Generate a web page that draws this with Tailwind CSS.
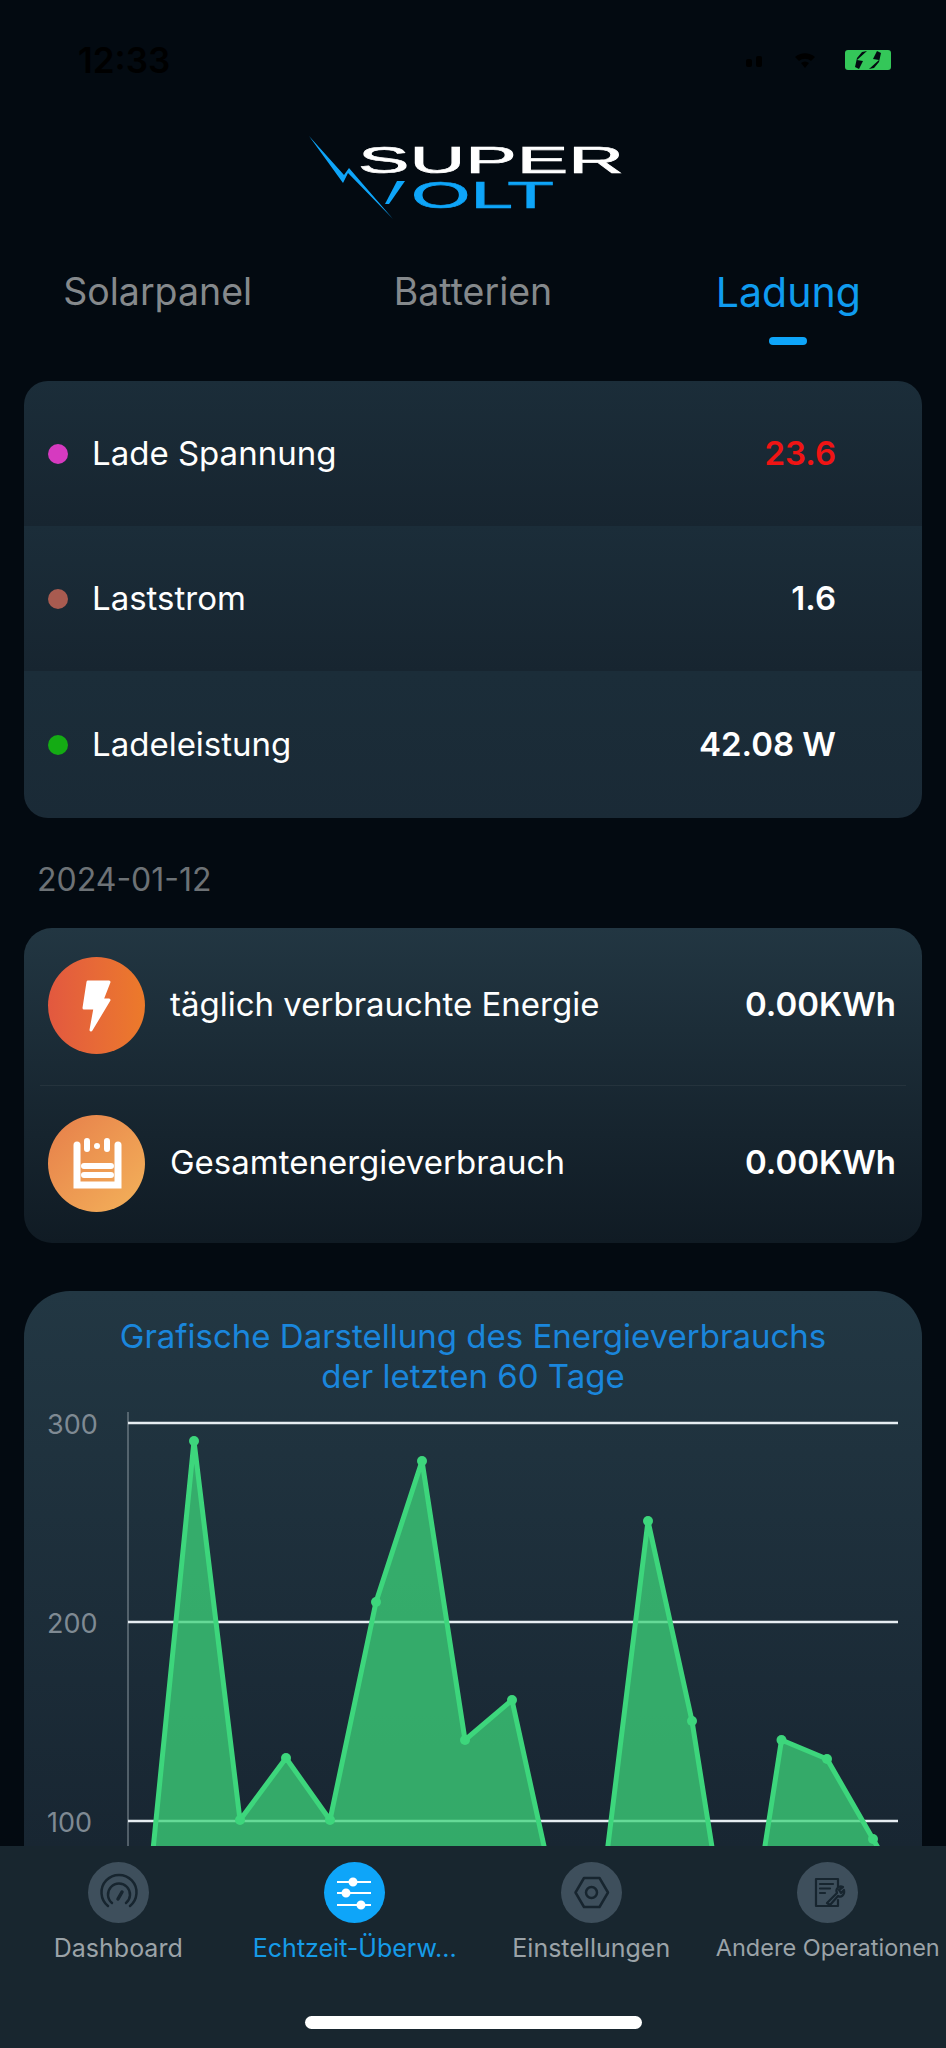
<!DOCTYPE html>
<html lang="de">
<head>
  <meta charset="UTF-8">
  <meta name="viewport" content="width=device-width, initial-scale=1.0">
  <title>Super Volt</title>
  <script src="https://cdn.jsdelivr.net/npm/@tailwindcss/browser@4"></script>
</head>
<body class="bg-[#030a11]">
<div class="w-[946px] h-[2048px] flex flex-col overflow-hidden font-['Inter','Noto_Sans',sans-serif] bg-[#030a11]">

  <!-- status bar -->
  <div class="h-[130px] shrink-0 flex items-start justify-between pl-[78px] pr-[55px] pt-[42px]">
    <span class="text-[35px] leading-[36px] font-semibold text-black">12:33</span>
    <div class="flex items-center gap-[28px] pt-[8px]">
      <svg width="20" height="14" viewBox="0 0 20 14" fill="#000"><rect x="1" y="6" width="6" height="8" rx="2"/><rect x="11" y="3" width="6" height="11" rx="2"/></svg>
      <svg width="24" height="18" viewBox="0 0 24 18" fill="#000"><path d="M2 6c6-5 14-5 20 0l-4 4c-4-3-8-3-12 0z"/><path d="M8 12c2.500-2 5.500-2 8 0l-4 5z"/></svg>
      <svg width="46" height="20" viewBox="0 0 46 20"><rect width="46" height="20" rx="3" fill="#34c759"/><path d="M22 1 12 10 18 11 14 19 10 17 12 8 17 2zM24 19 34 10 28 9 32 1 36 3 34 12 29 18z" fill="#030a11"/></svg>
    </div>
  </div>

  <!-- logo -->
  <div class="h-[95px] shrink-0 flex justify-center pr-[16px]">
    <svg width="330" height="95" viewBox="300 130 330 95">
      <path d="M309 136 343 183 348 173 393 219 349 168 344 175z" fill="#0ea5f9"/>
      <path d="M397 181H405L389 204H385z" fill="#0ea5f9"/>
      <text x="358" y="173" textLength="266" lengthAdjust="spacingAndGlyphs" font-family="Liberation Sans" font-size="36" fill="#fff" stroke="#fff" stroke-width=".6">SUPER</text>
      <text x="411" y="208" textLength="143" lengthAdjust="spacingAndGlyphs" font-family="Liberation Sans" font-size="37" fill="#0ea5f9" stroke="#0ea5f9" stroke-width=".6">OLT</text>
    </svg>
  </div>

  <!-- tabs -->
  <div class="grid grid-cols-3 shrink-0 mt-[45px] text-center text-[37.500px] leading-[44px] text-[#85898c]">
    <div>Solarpanel</div>
    <div>Batterien</div>
    <div class="flex flex-col items-center text-[41px] text-[#0f9cf0]">
      <span>Ladung</span>
      <span class="w-[38px] h-[8px] mt-[23px] rounded-full bg-[#0ea5f9]"></span>
    </div>
  </div>

  <!-- live values -->
  <div class="mx-[24px] mt-[36px] shrink-0 rounded-[24px] overflow-hidden text-[33px] text-white">
    <div class="h-[145px] flex items-center pl-[24px] pr-[86px] pt-[1px] bg-gradient-to-b from-[#1b2d39] to-[#172530]">
      <span class="w-[20px] h-[20px] rounded-full bg-[#d63ac0]"></span>
      <span class="ml-[24px] flex-1">Lade Spannung</span>
      <span class="font-semibold text-[#f01414]">23.6</span>
    </div>
    <div class="h-[145px] flex items-center pl-[24px] pr-[86px] pt-[1px] bg-gradient-to-b from-[#1b2d39] to-[#172530]">
      <span class="w-[20px] h-[20px] rounded-full bg-[#a85b50]"></span>
      <span class="ml-[24px] flex-1">Laststrom</span>
      <span class="font-semibold">1.6</span>
    </div>
    <div class="h-[147px] flex items-center pl-[24px] pr-[86px] pt-[1px] bg-gradient-to-b from-[#1b2d39] to-[#1a2a36]">
      <span class="w-[20px] h-[20px] rounded-full bg-[#14ab14]"></span>
      <span class="ml-[24px] flex-1">Ladeleistung</span>
      <span class="font-semibold">42.08 W</span>
    </div>
  </div>

  <div class="ml-[37px] mt-[42px] shrink-0 text-[32px] leading-[40px] text-[#6d7276]">2024-01-12</div>

  <!-- energy -->
  <div class="mx-[24px] mt-[28px] shrink-0 rounded-[28px] bg-gradient-to-b from-[#223642] to-[#101b24] text-[33px] text-white">
    <div class="h-[157px] flex items-center pl-[24px] pr-[26px] pb-[3px]">
      <span class="w-[97px] h-[97px] rounded-full bg-gradient-to-r from-[#e2583f] to-[#ec7a2a] flex items-center justify-center">
        <svg width="97" height="97" viewBox="0 0 97 97"><path d="M40 25H61L54 43H61L43 73 47 51H36z" fill="#fff" stroke="#fff" stroke-width="3" stroke-linejoin="round"/></svg>
      </span>
      <span class="ml-[25px] flex-1">täglich verbrauchte Energie</span>
      <span class="font-semibold">0.00KWh</span>
    </div>
    <div class="mx-[16px] h-px bg-white/5"></div>
    <div class="h-[157px] flex items-center pl-[24px] pr-[26px] pb-[3px]">
      <span class="w-[97px] h-[97px] rounded-full bg-gradient-to-br from-[#e67e4a] to-[#f3b25a] flex items-center justify-center">
        <svg width="97" height="97" viewBox="0 0 97 97" fill="none" stroke="#fff"><path d="M29 30V70H70V30" stroke-width="7" stroke-linecap="round" stroke-linejoin="miter"/><path d="M39 26V34M59 26V34" stroke-width="6" stroke-linecap="round"/><path d="M36 51H63M36 60H63" stroke-width="6" stroke-linecap="round"/><circle cx="49" cy="31" r="3" fill="#fff" stroke="none"/></svg>
      </span>
      <span class="ml-[25px] flex-1">Gesamtenergieverbrauch</span>
      <span class="font-semibold">0.00KWh</span>
    </div>
  </div>

  <!-- chart -->
  <div class="mx-[24px] mt-[48px] flex-1 min-h-0 overflow-hidden rounded-t-[46px] bg-gradient-to-b from-[#223743] to-[#182632]">
    <div class="pt-[25px] pb-[1px] text-center text-[33px] leading-[40px] text-[#1a86dc]">
      <div>Grafische Darstellung des Energieverbrauchs</div>
      <div>der letzten 60 Tage</div>
    </div>
    <svg width="898" height="449" viewBox="24 1397 898 449" class="block">
      <g font-family="Inter" font-size="27" fill="#7f8a93">
        <text x="47" y="1434">300</text>
        <text x="47" y="1633">200</text>
        <text x="47" y="1832">100</text>
      </g>
      <path d="M128 1412V1846" stroke="#8a979f" stroke-width="1"/>
      <path d="M128 1423H898M128 1622H898M128 1821H898" stroke="#e6edf2" stroke-width="2.500"/>
      <path d="M151 1870 194 1441 240 1820 286 1758 330 1820 376 1602 422 1461 465 1740 512 1700 558 1910H600L648 1521 692 1721 722 1910H755L781.500 1740 827 1759 873 1839 885 1860V1900H151z" fill="#3dd47a" fill-opacity=".76"/>
      <g fill="none" stroke="#3dd67c" stroke-width="5" stroke-linejoin="round">
        <path d="M151 1870 194 1441 240 1820 286 1758 330 1820 376 1602 422 1461 465 1740 512 1700 558 1910"/>
        <path d="M600 1910 648 1521 692 1721 722 1910"/>
        <path d="M755 1910 781.500 1740 827 1759 873 1839 885 1860"/>
      </g>
      <g fill="#3dd67c">
        <circle cx="194" cy="1441" r="5"/><circle cx="240" cy="1820" r="5"/><circle cx="286" cy="1758" r="5"/>
        <circle cx="330" cy="1820" r="5"/><circle cx="376" cy="1602" r="5"/><circle cx="422" cy="1461" r="5"/>
        <circle cx="465" cy="1740" r="5"/><circle cx="512" cy="1700" r="5"/><circle cx="648" cy="1521" r="5"/>
        <circle cx="692" cy="1721" r="5"/><circle cx="781.500" cy="1740" r="5"/><circle cx="827" cy="1759" r="5"/>
        <circle cx="873" cy="1839" r="5"/>
      </g>
    </svg>
  </div>

  <!-- bottom nav -->
  <div class="h-[202px] shrink-0 bg-[#18262f] flex flex-col items-center">
    <div class="w-full grid grid-cols-4 pt-[16px] text-[25px] leading-[32px] text-[#9ba3a8] text-center">
      <div class="flex flex-col items-center">
        <span class="w-[61px] h-[61px] rounded-full bg-[#3e4f5c]">
          <svg width="61" height="61" viewBox="0 0 61 61" fill="none" stroke="#17252f" stroke-width="2.500" stroke-linecap="round"><path d="M20 44A17.500 17.500 0 1 1 42 44"/><path d="M24 41A11 11 0 1 1 38 41"/><path d="M30 37 34 30" stroke-width="3.500"/></svg>
        </span>
        <span class="mt-[9px] whitespace-nowrap">Dashboard</span>
      </div>
      <div class="flex flex-col items-center text-[#169be8]">
        <span class="w-[61px] h-[61px] rounded-full bg-[#0ea5f9]">
          <svg width="61" height="61" viewBox="0 0 61 61" fill="#fff" stroke="#fff" stroke-width="2"><path d="M13 20H47M13 31H47M13 43H47"/><circle cx="29" cy="20" r="3.500"/><circle cx="22" cy="31" r="3.500"/><circle cx="37" cy="43" r="3.500"/></svg>
        </span>
        <span class="mt-[9px] whitespace-nowrap">Echtzeit-Überw...</span>
      </div>
      <div class="flex flex-col items-center">
        <span class="w-[61px] h-[61px] rounded-full bg-[#3e4f5c]">
          <svg width="61" height="61" viewBox="0 0 61 61" fill="none" stroke="#17252f" stroke-width="2.500" stroke-linejoin="round"><path d="M14.500 30.500 23 16H38.500L47 30.500 38.500 45H23z"/><circle cx="30.500" cy="30.500" r="5.500"/></svg>
        </span>
        <span class="mt-[9px] whitespace-nowrap">Einstellungen</span>
      </div>
      <div class="flex flex-col items-center">
        <span class="w-[61px] h-[61px] rounded-full bg-[#3e4f5c]">
          <svg width="61" height="61" viewBox="0 0 61 61" fill="none" stroke="#17252f" stroke-width="2.200" stroke-linecap="round" stroke-linejoin="round"><path d="M41 25V17H19V44H41V38"/><path d="M23 22H36M23 26.500H33M23 31H28"/><path d="M30 41 40 31C38 27 42 23 46 25L42 28 44 31 47 28C48 33 44 36 41 34L33 43Z" fill="#3e4f5c"/></svg>
        </span>
        <span class="mt-[9px] whitespace-nowrap text-[23.500px]">Andere Operationen</span>
      </div>
    </div>
    <div class="w-[337px] h-[13px] mt-[52px] rounded-full bg-white"></div>
  </div>
</div>
</body>
</html>
